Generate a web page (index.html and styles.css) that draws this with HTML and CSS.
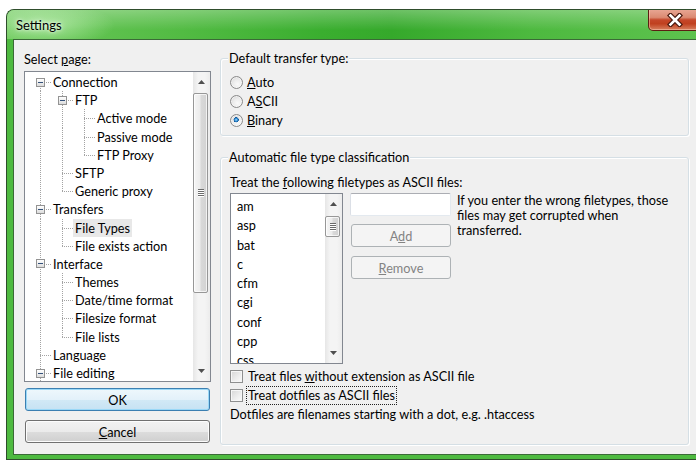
FILE: index.html
```html
<!DOCTYPE html>
<html lang="en">
<head>
<meta charset="utf-8">
<title>Settings</title>
<link rel="stylesheet" href="styles.css">
</head>
<body>
<div class="window">
  <div class="titlebar">
    <span class="title">Settings</span>
    <button class="close" aria-label="Close">
      <svg width="16" height="14" viewBox="0 0 16 14">
        <path d="M3.5 2.5 L12.5 11.5 M12.5 2.5 L3.5 11.5" stroke="#4a1a10" stroke-width="5" stroke-linecap="square"/>
        <path d="M3.5 2.5 L12.5 11.5 M12.5 2.5 L3.5 11.5" stroke="#fff" stroke-width="2.6" stroke-linecap="square"/>
      </svg>
    </button>
  </div>

  <div class="client">
    <div class="nav">
      <div class="nav-label">Select <u>p</u>age:</div>
      <div class="tree">
        <div class="tree-rows">
          <div class="row"><span class="g first exp"><i class="box"></i></span><span class="t">Connection</span></div>
          <div class="row"><span class="g pipe"></span><span class="g tee exp"><i class="box"></i></span><span class="t">FTP</span></div>
          <div class="row"><span class="g pipe"></span><span class="g pipe"></span><span class="g tee"></span><span class="t">Active mode</span></div>
          <div class="row"><span class="g pipe"></span><span class="g pipe"></span><span class="g tee"></span><span class="t">Passive mode</span></div>
          <div class="row"><span class="g pipe"></span><span class="g pipe"></span><span class="g ell"></span><span class="t">FTP Proxy</span></div>
          <div class="row"><span class="g pipe"></span><span class="g tee"></span><span class="t">SFTP</span></div>
          <div class="row"><span class="g pipe"></span><span class="g ell"></span><span class="t">Generic proxy</span></div>
          <div class="row"><span class="g tee exp"><i class="box"></i></span><span class="t">Transfers</span></div>
          <div class="row"><span class="g pipe"></span><span class="g tee"></span><span class="t sel">File Types</span></div>
          <div class="row"><span class="g pipe"></span><span class="g ell"></span><span class="t">File exists action</span></div>
          <div class="row"><span class="g tee exp"><i class="box"></i></span><span class="t">Interface</span></div>
          <div class="row"><span class="g pipe"></span><span class="g tee"></span><span class="t">Themes</span></div>
          <div class="row"><span class="g pipe"></span><span class="g tee"></span><span class="t">Date/time format</span></div>
          <div class="row"><span class="g pipe"></span><span class="g tee"></span><span class="t">Filesize format</span></div>
          <div class="row"><span class="g pipe"></span><span class="g ell"></span><span class="t">File lists</span></div>
          <div class="row"><span class="g tee"></span><span class="t">Language</span></div>
          <div class="row"><span class="g tee exp"><i class="box"></i></span><span class="t">File editing</span></div>
        </div>
        <div class="vscroll">
          <span class="arrow"><svg width="7" height="4" viewBox="0 0 7 4"><path d="M0 4 L3.5 0 L7 4 Z" fill="#4f4f4f"/></svg></span>
          <span class="thumb tree-thumb"><svg width="8" height="8" viewBox="0 0 8 8"><path d="M1 0.5h6M1 2.5h6M1 4.5h6M1 6.5h6" stroke="#6b6b6b"/><path d="M1 1.5h6M1 3.5h6M1 5.5h6M1 7.5h6" stroke="#fff"/></svg></span>
          <span class="arrow down"><svg width="7" height="4" viewBox="0 0 7 4"><path d="M0 0 L3.5 4 L7 0 Z" fill="#4f4f4f"/></svg></span>
        </div>
      </div>
      <button class="btn btn-default">OK</button>
      <button class="btn btn-cancel"><u>C</u>ancel</button>
    </div>

    <div class="pane">
      <div class="group group-transfer">
        <div class="group-label">Default transfer type:</div>
        <div class="radios">
          <label class="opt"><span class="radio"></span><span><u>A</u>uto</span></label>
          <label class="opt"><span class="radio"></span><span>A<u>S</u>CII</span></label>
          <label class="opt"><span class="radio on"></span><span><u>B</u>inary</span></label>
        </div>
      </div>

      <div class="group group-types">
        <div class="group-label">Automatic file type classification</div>
        <div class="hint">Treat the <u>f</u>ollowing filetypes as ASCII files:</div>
        <div class="types-row">
          <div class="listbox">
            <div class="list-items">
              <div class="li">am</div>
              <div class="li">asp</div>
              <div class="li">bat</div>
              <div class="li">c</div>
              <div class="li">cfm</div>
              <div class="li">cgi</div>
              <div class="li">conf</div>
              <div class="li">cpp</div>
              <div class="li">css</div>
            </div>
            <div class="vscroll">
              <span class="arrow"><svg width="7" height="4" viewBox="0 0 7 4"><path d="M0 4 L3.5 0 L7 4 Z" fill="#4f4f4f"/></svg></span>
              <span class="thumb list-thumb"><svg width="8" height="8" viewBox="0 0 8 8"><path d="M1 0.5h6M1 2.5h6M1 4.5h6M1 6.5h6" stroke="#6b6b6b"/><path d="M1 1.5h6M1 3.5h6M1 5.5h6M1 7.5h6" stroke="#fff"/></svg></span>
              <span class="arrow down"><svg width="7" height="4" viewBox="0 0 7 4"><path d="M0 0 L3.5 4 L7 0 Z" fill="#4f4f4f"/></svg></span>
            </div>
          </div>
          <div class="edit-col">
            <input class="field" type="text" aria-label="File type">
            <button class="btn btn-small" disabled>A<u>d</u>d</button>
            <button class="btn btn-small btn-remove" disabled><u>R</u>emove</button>
          </div>
          <p class="note">If you enter the wrong filetypes, those<br>files may get corrupted when<br>transferred.</p>
        </div>
        <label class="chk-row"><span class="check"></span><span>Treat files <u>w</u>ithout extension as ASCII file</span></label>
        <label class="chk-row"><span class="check"></span><span class="focus">Treat dotfiles as ASCII files</span></label>
        <div class="chk-note">Dotfiles are filenames starting with a dot, e.g. .htaccess</div>
      </div>
    </div>
  </div>
</div>
</body>
</html>
```

FILE: styles.css
```css
* { box-sizing: border-box; }

html, body { margin: 0; }

body {
  width: 696px;
  height: 460px;
  overflow: hidden;
  background: #fff;
  font-family: Lato, "Liberation Sans", sans-serif;
  font-size: 12.7px;
  line-height: 15px;
  color: #000;
}

button, input { font: inherit; color: inherit; margin: 0; }
u { text-decoration: underline; text-underline-offset: 1px; }

/* ---------- window frame ---------- */
.window {
  width: 700px;
  height: 451px;
  margin: 9px 0 0 6px;
  border: 1px solid #2f4d2c;
  border-right: none;
  border-radius: 8px 8px 0 0;
  background: #4eba40;
  display: flex;
  flex-direction: column;
  overflow: hidden;
}

.titlebar {
  height: 29px;
  flex: none;
  display: flex;
  align-items: flex-start;
  background:
    radial-gradient(ellipse 70px 22px at 38px 15px, rgba(220,255,210,.55), rgba(220,255,210,0)),
    linear-gradient(to bottom, rgba(255,255,255,.28), rgba(255,255,255,0) 70%),
    linear-gradient(to right, #6cc85b 0%, #52bb43 25%, #3aae2f 45%, #35a92b 55%, #4db93f 75%, #5ec34f 100%);
}

.title {
  margin: 8px 0 0 9px;
  font-size: 13px;
  line-height: 15px;
  text-shadow: 0 0 6px rgba(255,255,255,.9), 0 0 3px rgba(255,255,255,.8);
}

.close {
  margin: -1px 4px 0 auto;
  width: 54px;
  height: 22px;
  padding: 0;
  border: 1px solid #5c1e12;
  border-top: none;
  border-radius: 0 0 5px 5px;
  background: linear-gradient(to bottom, #e9a896 0%, #db8a72 40%, #c5472a 52%, #c0401f 70%, #d8805f 100%);
  box-shadow: inset 0 0 0 1px rgba(255,220,200,.45);
  display: flex;
  align-items: center;
  justify-content: center;
}
.close svg { display: block; margin-top: 1px; }

.client {
  flex: 1;
  margin: 0 0 4px 6px;
  border: 1px solid #3b6a37;
  border-right: none;
  background: #f0f0f0;
  display: flex;
  padding-left: 10px;
}

/* ---------- left navigation ---------- */
.nav {
  width: 187px;
  flex: none;
  padding-top: 12px;
  display: flex;
  flex-direction: column;
}

.nav-label { height: 15px; }

.tree {
  margin-top: 4px;
  height: 311px;
  border: 1px solid #828790;
  background: #fff;
  display: flex;
}

.tree-rows {
  flex: 1;
  min-width: 0;
  overflow: hidden;
  padding: 1px 0 0 4px;
}

.row {
  height: 18.2px;
  display: flex;
  align-items: stretch;
  white-space: nowrap;
}

/* tree connector cells: dotted guide lines drawn as backgrounds */
.g {
  width: 22px;
  flex: none;
  background-repeat: no-repeat;
  --dv: repeating-linear-gradient(to bottom, #a3a3a3 0 1px, transparent 1px 2px);
  --dh: repeating-linear-gradient(to right, #a3a3a3 0 1px, transparent 1px 2px);
}
.pipe { background-image: var(--dv); background-size: 1px 100%; background-position: 11px 0; }
.tee  { background-image: var(--dv), var(--dh); background-size: 1px 100%, 11px 1px; background-position: 11px 0, 11px 9px; }
.ell  { background-image: var(--dv), var(--dh); background-size: 1px 9px, 11px 1px; background-position: 11px 0, 11px 9px; }
.first { background-image: var(--dv), var(--dh); background-size: 1px 100%, 11px 1px; background-position: 11px 9px, 11px 9px; }

.exp { display: flex; align-items: center; }
.box {
  width: 9px;
  height: 9px;
  margin-left: 7px;
  border: 1px solid #939393;
  background:
    linear-gradient(#34517a, #34517a) center / 5px 1px no-repeat,
    linear-gradient(to bottom, #ffffff, #dcdcdc);
}

.t {
  padding: 0 2px;
  line-height: 18px;
  height: 18px;
}
.t.sel { background: #e8e8e8; }

/* ---------- scrollbars ---------- */
.vscroll {
  width: 17px;
  flex: none;
  display: flex;
  flex-direction: column;
  background: linear-gradient(to right, #e6e6e6, #f4f4f4 30%, #f4f4f4 70%, #ececec);
}
.arrow {
  height: 20px;
  flex: none;
  display: flex;
  align-items: center;
  justify-content: center;
}
.arrow svg { display: block; }
.arrow.down { margin-top: auto; }

.thumb {
  margin: 1px 1px 0 0;
  width: 15px;
  border: 1px solid #979797;
  border-radius: 2px;
  background: linear-gradient(to right, #f5f5f5 0%, #ececec 45%, #d9d9d9 55%, #d2d2d2 100%);
  box-shadow: inset 0 0 0 1px rgba(255,255,255,.7);
  display: flex;
  align-items: center;
  justify-content: center;
}
.tree-thumb { height: 200px; }
.list-thumb { height: 21px; margin-top: 2px; }

/* ---------- buttons ---------- */
.btn {
  height: 23px;
  padding: 0;
  border: 1px solid #707070;
  border-radius: 3px;
  background: linear-gradient(to bottom, #f2f2f2 0%, #ebebeb 50%, #dddddd 50%, #cfcfcf 100%);
  box-shadow: inset 0 0 0 1px #fcfcfc;
  text-align: center;
  line-height: 20px;
}
.btn-default {
  margin: 6px 0 0 1px;
  width: 185px;
  border-color: #3c7fb1;
  box-shadow: inset 0 0 0 1px #9ad8f7;
  background: linear-gradient(to bottom, #eef7fc 0%, #e3f1fa 50%, #d2e9f6 50%, #c6e2f3 100%);
}
.btn-cancel { margin: 9px 0 0 1px; width: 185px; }

.btn-small {
  width: 100px;
  margin-left: 1px;
}
.btn-small:disabled {
  border-color: #adb2b5;
  background: #f4f4f4;
  box-shadow: none;
  color: #838383;
}
.btn-small { margin-top: 8px; }
.btn-remove { margin-top: 9px; }

/* ---------- right pane ---------- */
.pane {
  margin-left: 9px;
  padding-top: 18px;
  width: 469px;
  flex: none;
}

.group {
  border: 1px solid #d5dfe5;
  border-radius: 3px;
  box-shadow: 1px 1px 0 #fff, inset 1px 1px 0 #fff;
  padding: 0 0 5px 9px;
}
.group-label {
  margin: -8px 0 0 -2px;
  padding: 0 1px;
  width: fit-content;
  height: 15px;
  background: #f0f0f0;
}

.radios { margin-top: 7px; }
.opt {
  height: 19px;
  display: flex;
  align-items: center;
  gap: 4px;
}
.radio {
  width: 13px;
  height: 13px;
  flex: none;
  border-radius: 50%;
  border: 1px solid #8a8a8a;
  background: radial-gradient(circle at 60% 65%, #fafafa 0%, #ececec 45%, #cdcdcd 100%);
  box-shadow: inset 0 0 0 1px rgba(255,255,255,.55);
}
.radio.on {
  background:
    radial-gradient(circle closest-side at 45% 40%, #a8e0ff 0%, #3a97dc 45%, #13589a 85%, rgba(19,88,154,0) 100%) center / 7px 7px no-repeat,
    radial-gradient(circle at 60% 65%, #fafafa 0%, #ececec 45%, #cdcdcd 100%);
}

.group-types { margin-top: 21px; padding-bottom: 20px; }

.hint { margin-top: 10px; height: 15px; }

.types-row {
  margin-top: 3px;
  display: flex;
  align-items: flex-start;
}

.listbox {
  width: 113px;
  height: 171px;
  flex: none;
  border: 1px solid #828790;
  background: #fff;
  display: flex;
}
.list-items {
  flex: 1;
  overflow: hidden;
  padding: 3px 0 0 6px;
}
.li { height: 19.3px; line-height: 19px; }

.edit-col {
  margin-left: 7px;
  width: 102px;
  flex: none;
  display: flex;
  flex-direction: column;
}
.field {
  width: 101px;
  height: 23px;
  border: 1px solid #e3e9ef;
  border-top-color: #abadb3;
  border-left-color: #dbdfe6;
  border-radius: 2px;
  background: #fff;
  padding: 0 3px;
}

.note {
  margin: 0 0 0 5px;
  line-height: 15px;
  white-space: nowrap;
}

.chk-row {
  margin-top: 3px;
  height: 19px;
  display: flex;
  align-items: center;
  gap: 5px;
}
.chk-row + .chk-row { margin-top: 0; }
.check {
  width: 13px;
  height: 13px;
  flex: none;
  border: 1px solid #8e8f8f;
  background: linear-gradient(135deg, #d6d6d6 0%, #eeeeee 60%, #fbfbfb 100%);
  box-shadow: inset 0 0 0 1px #f6f6f6;
}
.focus {
  margin-left: -1px;
  padding: 1px 1px;
  outline: 1px dotted #222;
}
.chk-note { height: 19px; line-height: 19px; }
```
